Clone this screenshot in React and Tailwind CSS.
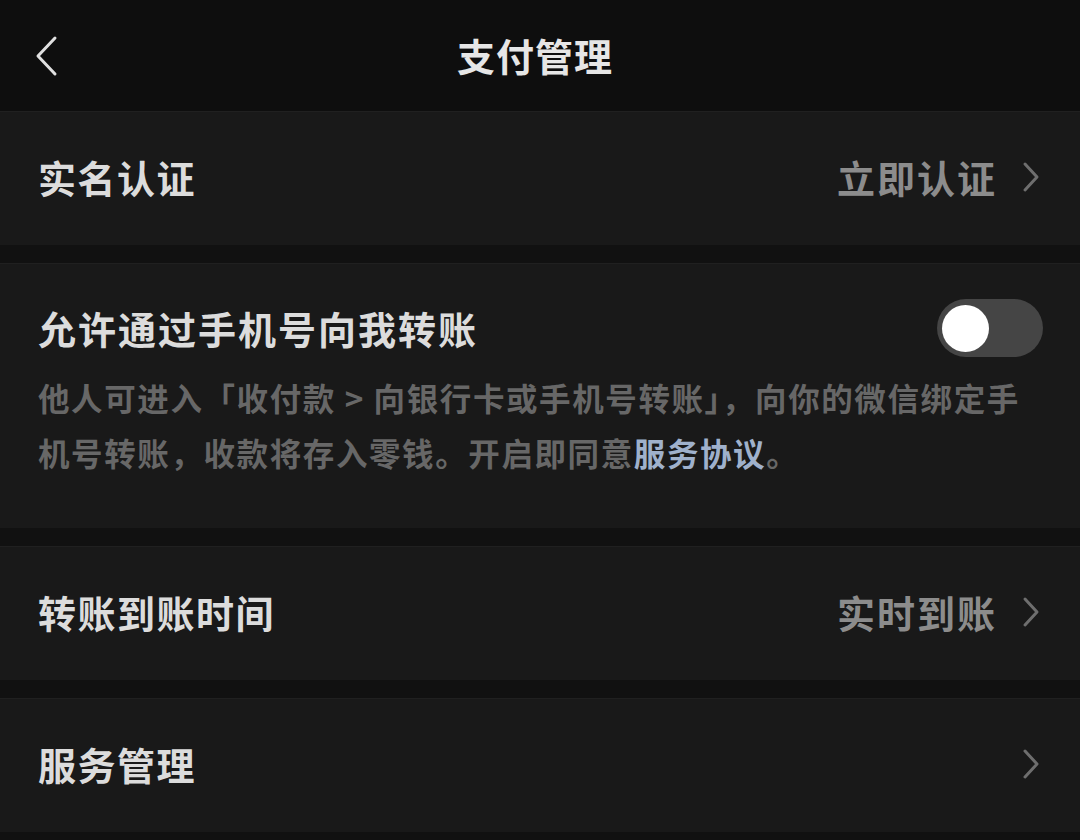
const font = { fontFamily: '"Noto Sans CJK SC", "Noto Sans", sans-serif' };

function Chevron() {
  return (
    <svg width="20" height="32" viewBox="0 0 20 32" className="shrink-0">
      <path d="M4 3 L16 16 L4 29" fill="none" stroke="#6e6e6e" strokeWidth="3" strokeLinecap="round" strokeLinejoin="round" />
    </svg>
  );
}

function Gap() {
  return <div className="h-[18px] bg-[#111111]" />;
}

function LinkRow({ title, value }) {
  return (
    <div className="flex items-center h-[134px] pl-[38px] pr-[39px] pb-[4px] bg-[#191919] border-t border-[#202020]">
      <span className="flex-1 text-[38px] font-bold text-[#dcdcdc] tracking-[1.5px]">{title}</span>
      {value ? (
        <span className="text-[38px] font-bold text-[#8c8c8c] mr-[24px] tracking-[2px]">{value}</span>
      ) : null}
      <Chevron />
    </div>
  );
}

export default function App() {
  return (
    <div className="w-[1080px] h-[840px] bg-[#111111] overflow-hidden" style={font}>
      <header className="relative flex items-center justify-center h-[111px] bg-[#0e0e0e]">
        <svg width="26" height="42" viewBox="0 0 26 42" className="absolute left-[33px] top-[35px]">
          <path d="M22 3 L5 21 L22 39" fill="none" stroke="#e0e0e0" strokeWidth="3" strokeLinecap="round" strokeLinejoin="round" />
        </svg>
        <h1 className="text-[38px] font-bold text-[#e6e6e6] tracking-[1px] -mt-[3px] -ml-[10px]">支付管理</h1>
      </header>

      <LinkRow title="实名认证" value="立即认证" />
      <Gap />

      <div className="bg-[#191919] border-t border-[#202020] pl-[38px] pr-[37px] pt-[39px] pb-[48px]">
        <div className="flex items-center justify-between h-[50px]">
          <span className="text-[38px] leading-[50px] font-bold text-[#dcdcdc] tracking-[2px]">允许通过手机号向我转账</span>
          <div className="flex items-center w-[106px] h-[58px] rounded-full bg-[#454545] px-[5px]">
            <div className="w-[47px] h-[47px] rounded-full bg-white" />
          </div>
        </div>
        <p className="mt-[17px] text-[31.5px] leading-[55px] font-bold text-[#676767] tracking-[1.6px]">
          他人可进入「收付款 &gt; 向银行卡或手机号转账」，向你的微信绑定手机号转账，收款将存入零钱。开启即同意<span className="text-[#9fb1cc]">服务协议</span>。
        </p>
      </div>
      <Gap />

      <LinkRow title="转账到账时间" value="实时到账" />
      <Gap />
      <LinkRow title="服务管理" />
    </div>
  );
}
